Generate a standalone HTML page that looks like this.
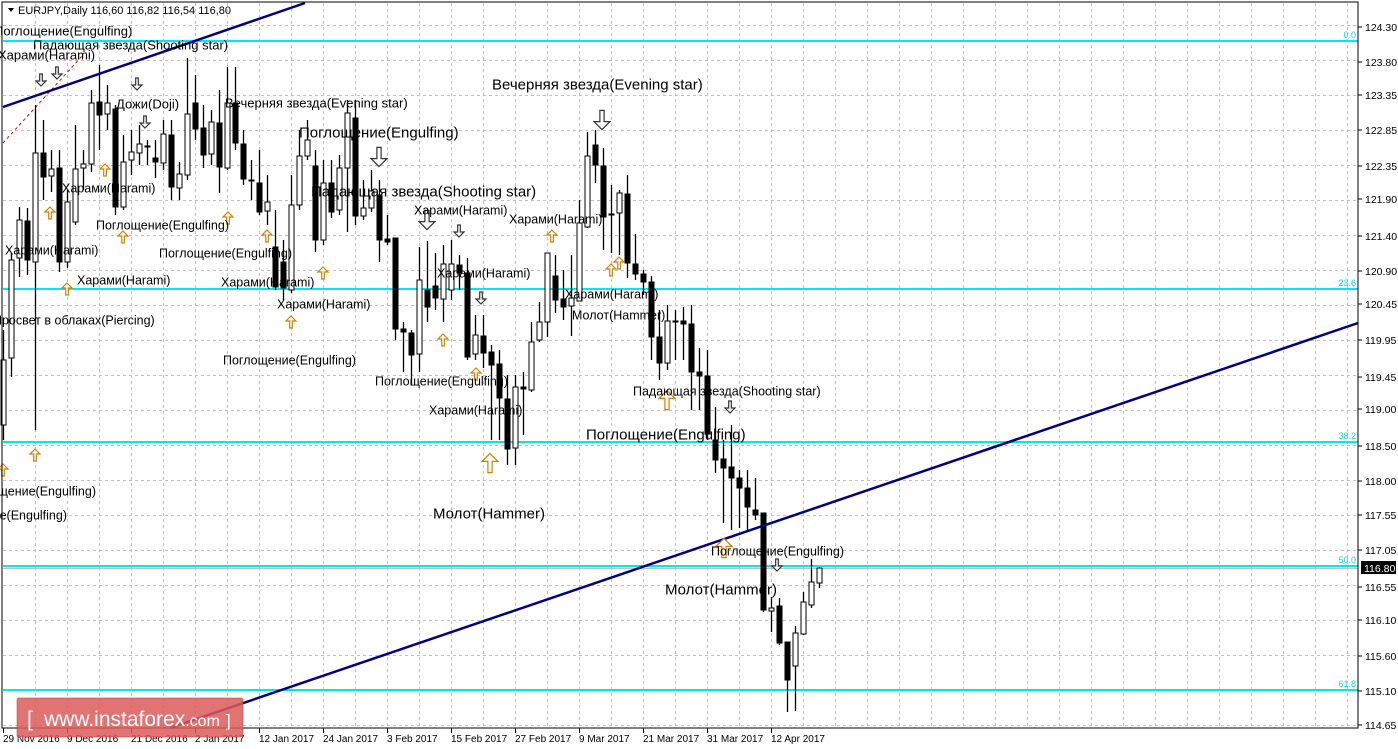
<!DOCTYPE html>
<html><head><meta charset="utf-8"><style>
html,body{margin:0;padding:0;background:#fff;width:1398px;height:749px;overflow:hidden}
svg{display:block}
text{font-family:"Liberation Sans",Arial,sans-serif}
</style></head><body>
<svg id="c" width="1398" height="749" xmlns="http://www.w3.org/2000/svg">
<rect width="1398" height="749" fill="#fff"/>
<g id="grid" stroke="#c0c0c0" stroke-width="1" stroke-dasharray="3,3"></g>
<g id="fib"></g>
<line x1="3" y1="568.5" x2="1358" y2="568.5" stroke="#c0c0c0" stroke-width="1"/>
<polyline points="3,143 83,55" stroke="#e00000" stroke-width="1" stroke-dasharray="3,3" fill="none"/>
<g id="candles"></g>
<line x1="3" y1="107" x2="305" y2="3" stroke="#000080" stroke-width="2.5"/>
<line x1="170" y1="728" x2="1358" y2="323" stroke="#000080" stroke-width="2.5"/>
<g id="arrows"></g>
<g id="labels" fill="#000"></g>
<rect x="2" y="2" width="1356" height="726" fill="none" stroke="#000" stroke-width="1"/>
<g id="axis" font-size="10.5" fill="#000"></g>
<g>
<rect x="17" y="698" width="226" height="39" rx="2" fill="#dc5a5a" fill-opacity="0.85" stroke="#c03838" stroke-opacity="0.5"/>
<text x="27" y="726" font-size="21" fill="#fff">[</text>
<text x="44" y="726" font-size="21" fill="#fff">www.instaforex<tspan font-size="16">.com</tspan></text>
<text x="226" y="726" font-size="17" fill="#fff">]</text>
</g>
<polygon points="8,8 14,8 11,12" fill="#000"/>
<text x="18" y="14" font-size="11">EURJPY,Daily  116,60 116,82 116,54 116,80</text>
</svg>
<script>
var NS="http://www.w3.org/2000/svg";
function el(p,n,a,t){var e=document.createElementNS(NS,n);for(var k in a)e.setAttribute(k,a[k]);if(t)e.textContent=t;document.getElementById(p).appendChild(e);return e;}
for(var x=35;x<1358;x+=32)el("grid","line",{x1:x+.5,y1:3,x2:x+.5,y2:728});
for(var y=25;y<728;y+=35)el("grid","line",{x1:3,y1:y+.5,x2:1358,y2:y+.5});
[[41,"0.0"],[289,"23.6"],[442,"38.2"],[566,"50.0"],[690,"61.8"]].forEach(function(f){
 el("fib","line",{x1:3,y1:f[0],x2:1358,y2:f[0],stroke:"#00e8f0","stroke-width":2});
 el("fib","text",{x:1356,y:f[0]-3,"font-size":9,fill:"#00d8e8","text-anchor":"end"},f[1]);
});
var C=[[425,360,330,440],[358,260,253,377],[258,220,207,277],[221,260,208,275],[262,153,105,430],[153,177,120,200],[176,169,150,192],[168,262,150,272],[262,202,190,268],[222,169,125,225],[168,164,150,190],[164,103,90,172],[102,115,65,150],[114,103,85,130],[109,207,105,215],[207,162,135,210],[160,152,130,175],[153,144,125,165],[146,146,140,165],[158,162,140,178],[163,134,120,170],[135,187,120,200],[188,174,162,200],[175,114,58,180],[103,129,75,140],[128,155,105,168],[154,122,110,165],[123,167,90,193],[168,103,67,170],[103,143,67,150],[144,179,130,185],[180,180,160,200],[183,212,150,215],[211,202,175,225],[247,287,210,290],[262,288,240,300],[290,205,175,293],[205,156,130,210],[156,140,120,160],[166,240,150,252],[240,183,160,245],[183,212,160,218],[210,168,155,215],[168,113,100,232],[118,216,100,225],[216,208,180,220],[208,191,170,212],[195,240,180,262],[239,242,215,245],[238,329,238,340],[329,332,322,372],[333,355,330,385],[354,280,247,372],[290,307,241,322],[286,298,253,310],[299,264,245,322],[290,264,240,300],[265,273,255,290],[273,357,258,360],[354,335,315,360],[336,353,315,368],[352,365,345,440],[364,398,350,440],[399,449,375,465],[448,387,375,465],[387,389,372,435],[390,342,322,392],[340,322,302,342],[322,253,253,337],[276,300,255,313],[299,307,270,320],[306,298,255,336],[301,223,200,300],[227,156,132,228],[145,165,130,183],[166,217,148,250],[214,214,185,253],[213,193,190,255],[194,263,175,278],[264,274,234,280],[274,282,270,295],[282,337,276,360],[337,363,310,380],[363,321,305,370],[321,321,310,360],[321,324,307,360],[324,372,305,410],[372,376,348,410],[376,434,350,440],[440,460,407,473],[459,468,440,523],[467,478,425,530],[478,488,470,528],[488,507,470,530],[510,515,478,520],[513,610,513,612],[611,608,597,632],[606,643,598,645],[642,680,642,712],[666,633,626,711],[634,602,592,635],[605,582,559,608],[583,568,567,588]];
C.forEach(function(c,j){
 var x=Math.round(3.3+8*j)+.5;
 el("candles","line",{x1:x,y1:c[2],x2:x,y2:c[3],stroke:"#000","stroke-width":1.3});
 var t=Math.min(c[0],c[1]),b=Math.max(c[0],c[1]);if(b-t<1)b=t+1;
 var bull=c[1]<c[0];
 el("candles","rect",{x:x-2.5,y:t,width:5,height:b-t,fill:bull?"#fff":"#000",stroke:"#000","stroke-width":1});
});
function arrow(cx,cy,up,s){
 var w=5*s,h=6*s,sw=2.5*s;var p;
 if(up)p=[[cx,cy-h],[cx+w,cy-h+w],[cx+sw/1.9,cy-h+w],[cx+sw/1.9,cy+h],[cx-sw/1.9,cy+h],[cx-sw/1.9,cy-h+w],[cx-w,cy-h+w]];
 else p=[[cx,cy+h],[cx+w,cy+h-w],[cx+sw/1.9,cy+h-w],[cx+sw/1.9,cy-h],[cx-sw/1.9,cy-h],[cx-sw/1.9,cy+h-w],[cx-w,cy+h-w]];
 el("arrows","polygon",{points:p.map(function(q){return q.join(",")}).join(" "),fill:"#fff",stroke:up?"#d08000":"#333","stroke-width":1.2});
}
[[3,470],[35,455],[50,213],[67,289],[123,237],[105,170],[228,218],[267,236],[323,273],[291,322],[443,340],[476,374],[552,236],[611,270],[619,263]].forEach(function(a){arrow(a[0],a[1],true,1)});
[[41,80],[57,73],[137,84],[145,122],[481,298],[730,407],[777,565],[459,231]].forEach(function(a){arrow(a[0],a[1],false,1)});
[[602,120],[379,157],[427,220]].forEach(function(a){arrow(a[0],a[1],false,1.6)});
[[490,463],[667,400],[724,548]].forEach(function(a){arrow(a[0],a[1],true,1.6)});
[["Поглощение(Engulfing)",-6,31,13],["Падающая звезда(Shooting star)",33,45,13],["Харами(Harami)",-2,55,13],["Дожи(Doji)",116,104,13],["Вечерняя звезда(Evening star)",225,103,13],["Поглощение(Engulfing)",299,132,15],["Вечерняя звезда(Evening star)",492,84,15],["Падающая звезда(Shooting star)",311,191,15],["Харами(Harami)",62,188,12.5],["Поглощение(Engulfing)",96,225,12.5],["Поглощение(Engulfing)",159,253,12.5],["Харами(Harami)",414,210,12.5],["Харами(Harami)",509,219,12.5],["Харами(Harami)",5,250,12.5],["Харами(Harami)",77,280,12.5],["Харами(Harami)",221,282,12.5],["Харами(Harami)",437,273,12.5],["Харами(Harami)",277,304,12.5],["Харами(Harami)",565,294,12.5],["Молот(Hammer)",572,315,12.5],["Просвет в облаках(Piercing)",-7,320,12.5],["Поглощение(Engulfing)",223,360,12.5],["Поглощение(Engulfing)",375,381,12.5],["Падающая звезда(Shooting star)",633,391,12.5],["Харами(Harami)",429,410,12.5],["Поглощение(Engulfing)",586,434,15],["Поглощение(Engulfing)",-37,491,12.5],["Поглощение(Engulfing)",-66,515,12.5],["Молот(Hammer)",433,513,15],["Поглощение(Engulfing)",711,551,12.5],["Молот(Hammer)",665,589,15]].forEach(function(l){
 el("labels","text",{x:l[1],y:l[2]+l[3]*0.36,"font-size":l[3]},l[0]);
});
[["124.30",27],["123.80",62],["123.35",95],["122.85",130],["122.35",166],["121.90",199],["121.40",236],["120.90",271],["120.45",304],["119.95",340],["119.45",377],["119.00",409],["118.50",446],["118.00",481],["117.55",515],["117.05",550],["116.55",587],["116.10",620],["115.60",656],["115.10",691],["114.65",725]].forEach(function(p){
 el("axis","line",{x1:1358,y1:p[1],x2:1362,y2:p[1],stroke:"#000"});
 el("axis","text",{x:1365,y:p[1]+4},p[0]);
});
el("axis","rect",{x:1361,y:561,width:35,height:13,fill:"#000"});
el("axis","text",{x:1364,y:572,fill:"#fff"},"116.80");
["29 Nov 2016","9 Dec 2016","21 Dec 2016","2 Jan 2017","12 Jan 2017","24 Jan 2017","3 Feb 2017","15 Feb 2017","27 Feb 2017","9 Mar 2017","21 Mar 2017","31 Mar 2017","12 Apr 2017"].forEach(function(d,i){
 var x=3+64*i;
 el("axis","line",{x1:x+.5,y1:728,x2:x+.5,y2:733,stroke:"#000"});
 el("axis","text",{x:x,y:742,"font-size":10},d);
});
</script>
</body></html>
